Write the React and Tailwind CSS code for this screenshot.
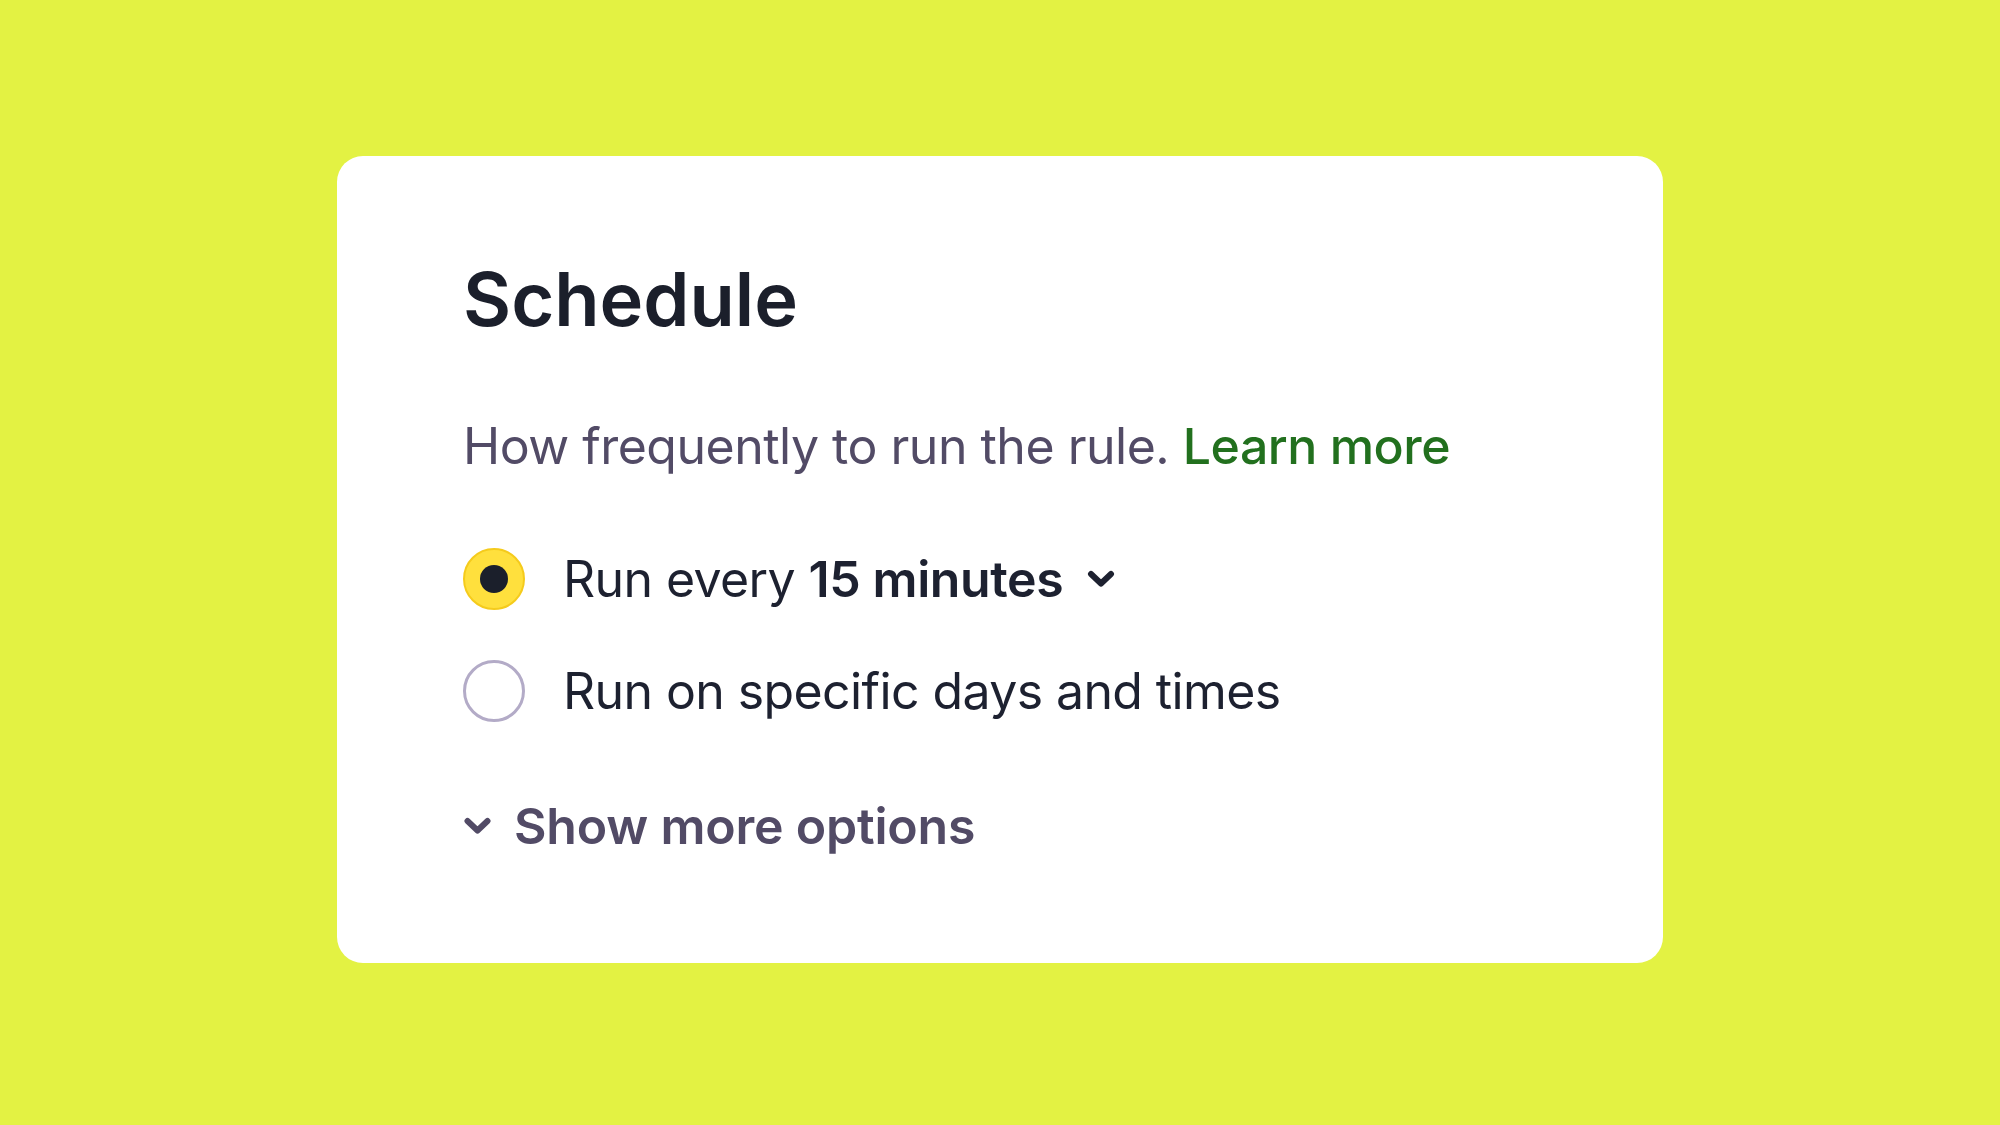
import React, { useState } from 'react';

const Chevron = ({ className }) => (
    <svg viewBox="0 0 28 18" className={className} fill="none">
        <path d="M4 4 L14 13.5 L24 4" stroke="currentColor" strokeWidth="6" strokeLinecap="round" strokeLinejoin="round" />
    </svg>
);

const Radio = ({ checked }) => (
    checked ? (
        <div className="w-[62px] h-[62px] rounded-full bg-[#ffe03d] border-2 border-[#f5cb1c] flex items-center justify-center shrink-0">
            <div className="w-[28px] h-[28px] rounded-full bg-[#1b1f2b]" />
        </div>
    ) : (
        <div className="w-[62px] h-[62px] rounded-full bg-white border-[3px] border-[#b3abc7] shrink-0" />
    )
);

const App = () => {
    const [mode, setMode] = useState('interval');

    return (
        <div className="w-full h-[1125px] bg-[#e3f243] flex items-center justify-center pb-[6px] font-['Inter',sans-serif]">
            <div className="w-[1326px] bg-white rounded-[26px] pl-[126px] pr-[100px] pt-[106px] pb-[112px]">
                <h1 className="text-[74px] leading-none font-semibold text-[#1b1f2b]">Schedule</h1>

                <p className="mt-[85px] text-[50px] leading-none text-[#524b66] tracking-[-0.5px]">
                    How frequently to run the rule.{' '}
                    <a href="#" className="text-[#22701e] font-medium">Learn more</a>
                </p>

                {/* Options */}
                <div className="mt-[76px] flex flex-col gap-[48px]">
                    <div className="flex items-center h-[64px] cursor-pointer" onClick={() => setMode('interval')}>
                        <Radio checked={mode === 'interval'} />
                        <span className="ml-[38px] text-[50px] leading-none text-[#1d2130] tracking-[-0.6px]">
                            Run every <span className="font-semibold tracking-[-0.4px]">15 minutes</span>
                        </span>
                        <Chevron className="ml-[24px] w-[28px] h-[18px] text-[#1d2130]" />
                    </div>
                    <div className="flex items-center h-[64px] cursor-pointer" onClick={() => setMode('specific')}>
                        <Radio checked={mode === 'specific'} />
                        <span className="ml-[38px] text-[50px] leading-none text-[#1d2130] tracking-[-0.6px]">Run on specific days and times</span>
                    </div>
                </div>

                <button className="mt-[78px] flex items-center text-[#524b66]">
                    <Chevron className="w-[29px] h-[18px]" />
                    <span className="ml-[22px] text-[50px] leading-none font-semibold tracking-[-0.2px]">Show more options</span>
                </button>
            </div>
        </div>
    );
};

export default App;
